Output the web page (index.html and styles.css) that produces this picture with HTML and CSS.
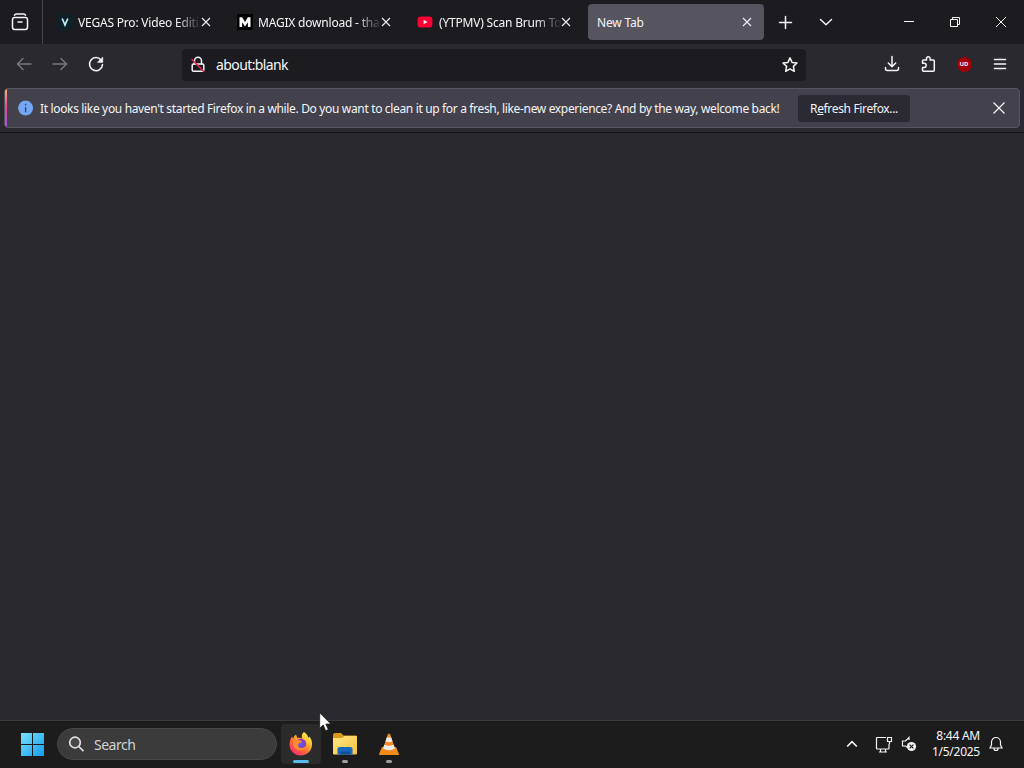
FILE: index.html
```html
<!DOCTYPE html>
<html lang="en">
<head>
<meta charset="utf-8">
<title>New Tab</title>
<link rel="stylesheet" href="styles.css">
</head>
<body>
<div class="screen">
  <header class="tabbar">
    <button class="view-btn" aria-label="Firefox View"><svg width="18" height="18" viewBox="0 0 18 18" class="line"><path d="M3.500 2.200c.3-.8.8-1.200 1.600-1.200h7.800c.8 0 1.300.4 1.600 1.200"/><rect x="1.500" y="4.600" width="15" height="11.900" rx="2.200"/><path d="M7 9h4"/></svg></button>
    <div class="tabs">
      <div class="tab"><svg class="fav" viewBox="0 0 16 16"><rect width="16" height="16" rx="1" fill="#102027"/><path d="M5.200 4.500L8 11l2.800-6.500" fill="none" stroke="#b9eef5" stroke-width="1.700"/></svg><span class="label fade">VEGAS Pro: Video Editi</span><svg class="x" viewBox="0 0 10 10"><path d="M1 1l8 8M9 1L1 9"/></svg></div>
      <div class="tab"><svg class="fav" viewBox="0 0 16 16"><rect width="16" height="16" fill="#000"/><path d="M2.500 13V3.300h2.700L8 8l2.800-4.700h2.700V13h-2.600V8.200L8 12.500 5.100 8.200V13z" fill="#fff"/></svg><span class="label fade">MAGIX download - tha</span><svg class="x" viewBox="0 0 10 10"><path d="M1 1l8 8M9 1L1 9"/></svg></div>
      <div class="tab"><svg class="fav" viewBox="0 0 16 16"><rect x=".6" y="2.600" width="14.800" height="10.800" rx="3" fill="#ff0033"/><path d="M6.600 5.700v4.600L10.500 8z" fill="#fff"/></svg><span class="label fade video">(YTPMV) Scan Brum To</span><svg class="x" viewBox="0 0 10 10"><path d="M1 1l8 8M9 1L1 9"/></svg></div>
      <div class="tab active"><span class="label">New Tab</span><svg class="x" viewBox="0 0 10 10"><path d="M1 1l8 8M9 1L1 9"/></svg></div>
    </div>
    <button class="tool" aria-label="New tab"><svg width="14" height="14" viewBox="0 0 14 14" class="line"><path d="M7.500 1.500v12M1.500 7.500h12"/></svg></button>
    <button class="tool" aria-label="List tabs"><svg width="14" height="14" viewBox="0 0 14 14" class="line"><path d="M1.500 4.500L7 9.700l5.500-5.200"/></svg></button>
    <div class="winctl">
      <button aria-label="Minimize"><svg width="12" height="12" viewBox="0 0 12 12"><path d="M1 5.500h10"/></svg></button>
      <button aria-label="Restore"><svg width="12" height="12" viewBox="0 0 12 12"><path d="M1.500 3.500h7v7h-7zM3.500 3.500v-2h7v7h-2"/></svg></button>
      <button aria-label="Close"><svg width="12" height="12" viewBox="0 0 12 12"><path d="M1 1l10 10M11 1L1 11"/></svg></button>
    </div>
  </header>

  <nav class="toolbar">
    <button class="nav dim" aria-label="Back"><svg width="16" height="16" viewBox="0 0 16 16" class="line"><path d="M15 8H1.500M7 2.500L1.500 8 7 13.500"/></svg></button>
    <button class="nav dim" aria-label="Forward"><svg width="16" height="16" viewBox="0 0 16 16" class="line"><path d="M1 8h13.500M9 2.500L14.500 8 9 13.500"/></svg></button>
    <button class="nav" aria-label="Reload"><svg width="16" height="16" viewBox="0 0 16 16" class="line"><path d="M13.200 4.200A6.500 6.500 0 1 0 14.500 8.600"/><path d="M14.700 1.500v4.800H9.900z" fill="currentColor" stroke-width=".8"/></svg></button>
    <div class="urlbar">
      <svg width="16" height="18" viewBox="0 0 16 18" class="line"><path d="M4.500 8V4.700a3.500 3.500 0 0 1 7 0V8"/><rect x="2.200" y="8" width="11.600" height="7.200" rx="1.300"/><path d="M2 3.500L13.700 15.500" stroke="#e22850" stroke-width="1.600"/></svg>
      <span class="url">about:blank</span>
      <svg width="16" height="16" viewBox="0 0 16 16" class="line"><path d="M8 .9l2.100 4.500 4.900.6-3.600 3.400.9 4.900L8 11.900l-4.300 2.400.9-4.900L1 6l4.900-.6z"/></svg>
    </div>
    <div class="actions">
      <button class="nav" aria-label="Downloads"><svg width="16" height="16" viewBox="0 0 16 16" class="line"><path d="M8 .5v10M4.300 7L8 10.700 11.700 7M1.500 11.500v1.300c0 1.200.7 1.700 1.800 1.700h9.400c1.100 0 1.800-.5 1.800-1.700v-1.300"/></svg></button>
      <button class="nav" aria-label="Extensions"><svg width="16" height="16" viewBox="0 0 16 16" class="line"><path d="M2.500 7V5q0-1 1-1h3V2.600a1.800 1.800 0 0 1 3.600 0V4h3.200q1 0 1 1v9.300q0 1-1 1H3.500q-1 0-1-1v-2.800h1.600a1.900 1.900 0 0 0 0-4.200H2.500"/></svg></button>
      <button class="nav" aria-label="uBlock Origin"><span class="shield">UD</span></button>
      <button class="nav" aria-label="Menu"><svg width="14" height="14" viewBox="0 0 14 14" class="line"><path d="M1.500 2.500h11M1.500 7h11M1.500 11.500h11"/></svg></button>
    </div>
  </nav>

  <section class="notice">
    <div class="banner">
      <svg class="info" width="16" height="16" viewBox="0 0 16 16"><circle cx="7.600" cy="8" r="7.500" fill="#73a7f3"/><path d="M7.600 3.800v1.600M7.600 7v5.200" stroke="#2b4a91" stroke-width="1.400"/></svg>
      <span class="message">It looks like you haven't started Firefox in a while. Do you want to clean it up for a fresh, like-new experience? And by the way, welcome back!</span>
      <button class="refresh"><span>R<u>e</u>fresh Firefox...</span></button>
      <svg class="dismiss" width="14" height="14" viewBox="0 0 14 14"><path d="M1.500 1.500l11 11M12.500 1.500l-11 11"/></svg>
    </div>
  </section>

  <main class="page"></main>

  <footer class="taskbar">
    <svg class="start" width="24" height="24" viewBox="0 0 24 24"><defs><linearGradient id="win" x1="0" y1="0" x2="24" y2="24" gradientUnits="userSpaceOnUse"><stop offset="0" stop-color="#7ce5ff"/><stop offset="1" stop-color="#139bec"/></linearGradient></defs><path d="M1 1h11v11H1zM13 1h11v11H13zM1 13h11v11H1zM13 13h11v11H13z" fill="url(#win)"/></svg>
    <div class="search"><svg width="16" height="16" viewBox="0 0 16 16"><circle cx="6" cy="6.500" r="5.300" fill="#484848"/><path d="M9.800 10.500L14.500 15.200"/></svg><span>Search</span></div>
    <div class="app current">
      <svg width="24" height="26" viewBox="0 0 24 26"><defs><linearGradient id="fox" x1="20" y1="3" x2="5" y2="23" gradientUnits="userSpaceOnUse"><stop offset="0" stop-color="#fff04d"/><stop offset=".35" stop-color="#ffb52b"/><stop offset=".65" stop-color="#ff6639"/><stop offset="1" stop-color="#f62e68"/></linearGradient><radialGradient id="globe"><stop offset="0" stop-color="#5f62ec"/><stop offset="1" stop-color="#8e34bf"/></radialGradient></defs><path d="M15 1c3 2 4 4 4.300 6l1-1.500c2.600 3 3.200 6.500 2.500 10-1 5.300-5.500 9-11 9C5.500 24.500.8 20 .6 14 .4 10 1.700 7.300 3.300 5.500l.7 2.600C4.500 6 5.500 4.600 7 3.500L8.300 7c1.700-.5 3.400-.3 4.700.3C12.300 4.800 13 2.500 15 1z" fill="url(#fox)"/><circle cx="11.800" cy="13" r="5.400" fill="url(#globe)"/><path d="M4 8.300c2-.9 4.200-.6 6 1 .9.100 2 .2 2.800.6-.2 1.500-1.500 2-3.200 2.500-1.200 1.700-.2 4.400 2.400 4.600 2 .1 3.400-.8 4.600-2-.6 3.500-4 5.200-7.300 4.300C5.300 18 3.200 13.800 4 8.300z" fill="#ff8b2e"/></svg>
      <i class="pill"></i>
    </div>
    <div class="app">
      <svg width="26" height="24" viewBox="0 0 26 24"><defs><linearGradient id="fold" x1="0" y1="0" x2="1" y2="1"><stop offset="0" stop-color="#ffe684"/><stop offset="1" stop-color="#f9c13e"/></linearGradient></defs><path d="M1 3q0-2 2-2h6l2.500 2.500H24q1 0 1 1V9H1z" fill="#d99a1c"/><path d="M1 6h9l2.500-2H24q1 0 1 1v16.500q0 1-1 1H2q-1 0-1-1z" fill="url(#fold)"/><path d="M5.500 22.500V17q0-2 2-2h11q2 0 2 2v5.500z" fill="#1769bd"/><path d="M8 22.500v-3h10v3z" fill="#114f98"/></svg>
      <i class="pill"></i>
    </div>
    <div class="app">
      <svg width="22" height="24" viewBox="0 0 22 24"><path d="M4 15h14l3 7q.3 1-1 1H2q-1.300 0-1-1z" fill="#ef8b16"/><path d="M9.700 2.500Q11 .5 12.300 2.500L17.500 18Q11 22 4.500 18z" fill="#f58a1f"/><path d="M8.800 5.500h4.400l1.300 4q-3.500 1.500-7 0zM6.300 12.800q4.700 2 9.400 0l1.200 3.700Q11 20 5.100 16.500z" fill="#ececec"/></svg>
      <i class="pill"></i>
    </div>
    <div class="tray">
      <svg class="up" width="12" height="8" viewBox="0 0 12 8"><path d="M1.200 6.500L6 1.700l4.800 4.800"/></svg>
      <svg class="net" width="18" height="17" viewBox="0 0 18 17"><path d="M11 1.500H2q-.5 0-.5.500v10.500q0 .5.500.5h11.500q.5 0 .5-.500V8M5.500 13v3M10.500 13v3M4 16h8M12.500 1.500h4v4h-4zM14.500 5.500V8"/></svg>
      <svg class="vol" width="16" height="16" viewBox="0 0 16 16"><path d="M8 4V1.500L4.500 5H1.500v5h3l1.500 1.300"/><circle cx="10.500" cy="10.500" r="4.600" fill="#f3f3f3" stroke="none"/><path d="M8.600 8.600l3.800 3.800M12.400 8.600l-3.800 3.800" stroke="#222"/></svg>
      <div class="clock"><span>8:44 AM</span><span>1/5/2025</span></div>
      <svg class="bell" width="14" height="16" viewBox="0 0 14 16"><path d="M7 1.500a4.500 4.500 0 0 1 4.500 4.500v3l1.500 3H1l1.500-3V6A4.500 4.500 0 0 1 7 1.500zM5 12.500a2 2 0 0 0 4 0"/></svg>
    </div>
  </footer>
  <svg class="cursor" width="13" height="20" viewBox="0 0 13 20"><path d="M.7.8v15.400l3.500-3.300 2.500 5.800 2.600-1.100L6.900 12h4.900z" fill="#fff" stroke="#111" stroke-width=".7"/></svg>
</div>
</body>
</html>
```
FILE: styles.css
```css
* { box-sizing: border-box; }
body { margin: 0; background: #2a292f; font-family: "Noto Sans", "Open Sans", sans-serif; color: #f5f5f8; }
button { border: 0; padding: 0; margin: 0; background: none; color: inherit; font: inherit; display: flex; align-items: center; justify-content: center; }
svg { display: block; flex: none; overflow: visible; }
.line { fill: none; stroke: currentColor; stroke-width: 1.5; stroke-linecap: round; stroke-linejoin: round; }
.screen { position: relative; width: 1024px; height: 768px; display: flex; flex-direction: column; overflow: hidden; }

.tabbar { height: 44px; flex: none; background: #1c1b20; display: flex; align-items: center; }
.view-btn { width: 43px; height: 44px; border-right: 1px solid #45444a; padding-right: 3px; }
.tabs { display: flex; gap: 4px; margin-left: 5px; }
.tab { width: 176px; height: 36px; padding: 0 12px 0 9px; display: flex; align-items: center; border-radius: 4px; }
.tab.active { background: #56545f; }
.fav { width: 16px; height: 16px; margin-right: 5px; }
.label { flex: 1; min-width: 0; padding-top: 2px; font-size: 12px; line-height: 18px; white-space: nowrap; letter-spacing: -0.2px; }
.fade { flex: none; width: 123px; -webkit-mask-image: linear-gradient(to right, #000 98px, transparent 124px); mask-image: linear-gradient(to right, #000 98px, transparent 124px); }
.video { padding-left: 1px; }
.x { width: 10px; height: 10px; fill: none; stroke: #f0f0f4; stroke-width: 1.1; }
.tool { width: 40px; height: 36px; margin-left: 1px; }
.tool:first-of-type { margin-left: 0; }
.winctl { margin-left: auto; display: flex; }
.winctl button { width: 46px; height: 44px; }
.winctl svg { fill: none; stroke: #f5f5f5; stroke-width: 1; }

.toolbar { height: 42px; flex: none; background: #2a2930; display: flex; align-items: center; padding: 0 6px; }
.nav { width: 36px; height: 36px; padding-bottom: 2px; }
.dim { color: #77767c; }
.urlbar { width: 624px; height: 32px; margin-left: 68px; padding: 0 8px 1px; display: flex; align-items: center; background: #1c1b20; border-radius: 4px; }
.url { flex: 1; margin-left: 10px; font-size: 14px; letter-spacing: -0.6px; }
.actions { display: flex; margin-left: auto; }
.shield { width: 15px; height: 15px; border-radius: 50%; background: #a00008; display: flex; align-items: center; justify-content: center; font-size: 6px; font-weight: 700; }

.notice { height: 47px; flex: none; background: #2a2930; padding: 2px 4px 0; border-bottom: 1px solid #17161b; }
.banner { position: relative; height: 40px; display: flex; align-items: center; padding-left: 13px; background: #42414c; border: 1px solid #57565f; border-radius: 4px; overflow: hidden; }
.banner::before { content: ""; position: absolute; left: 0; top: 0; bottom: 0; width: 2px; background: linear-gradient(#ffb37b, #ef4b87 45%, #9b52ec); }
.message { width: 744px; margin-left: 6px; padding-top: 1px; font-size: 12px; white-space: nowrap; letter-spacing: -0.343px; }
.refresh { width: 112px; height: 27px; margin-left: 14px; padding-top: 1px; border-radius: 3px; background: #2b2a32; font-size: 12px; letter-spacing: -0.34px; }
.dismiss { margin-left: 82px; fill: none; stroke: #f2f2f5; stroke-width: 1.3; }

.page { flex: 1; background: #2a292f; }

.taskbar { height: 48px; flex: none; background: #1c1c1c; border-top: 1px solid #3b3b3e; display: flex; align-items: center; padding: 0 0 1px 20px; }
.search { width: 220px; height: 32px; margin-left: 13px; padding-left: 11px; display: flex; align-items: center; border-radius: 16px; background: #3b3b3b; border: 1px solid #464646; color: #d2d2d2; font-size: 14px; }
.search svg { fill: none; stroke: #e2e2e2; stroke-width: 1.7; }
.search span { margin-left: 9px; letter-spacing: -0.5px; }
.app { position: relative; width: 40px; height: 40px; margin-left: 4px; display: flex; align-items: center; justify-content: center; border-radius: 4px; }
.current { background: #2b2b2c; }
.pill { position: absolute; bottom: 1px; left: 17px; width: 6px; height: 3px; border-radius: 2px; background: #a0a0a0; }
.current .pill { left: 12px; width: 16px; background: #58b9ec; }
.tray { margin-left: auto; display: flex; align-items: center; padding-right: 21px; }
.tray svg { fill: none; stroke: #f3f3f3; stroke-width: 1.2; }
.tray .up { stroke-width: 1.7; }
.net { margin-left: 17px; }
.vol { margin-left: 8px; }
.clock { width: 63px; display: flex; flex-direction: column; align-items: flex-end; font-size: 12px; line-height: 16px; letter-spacing: -0.25px; }
.bell { margin-left: 9px; }
.cursor { position: absolute; left: 319px; top: 712px; }
```
